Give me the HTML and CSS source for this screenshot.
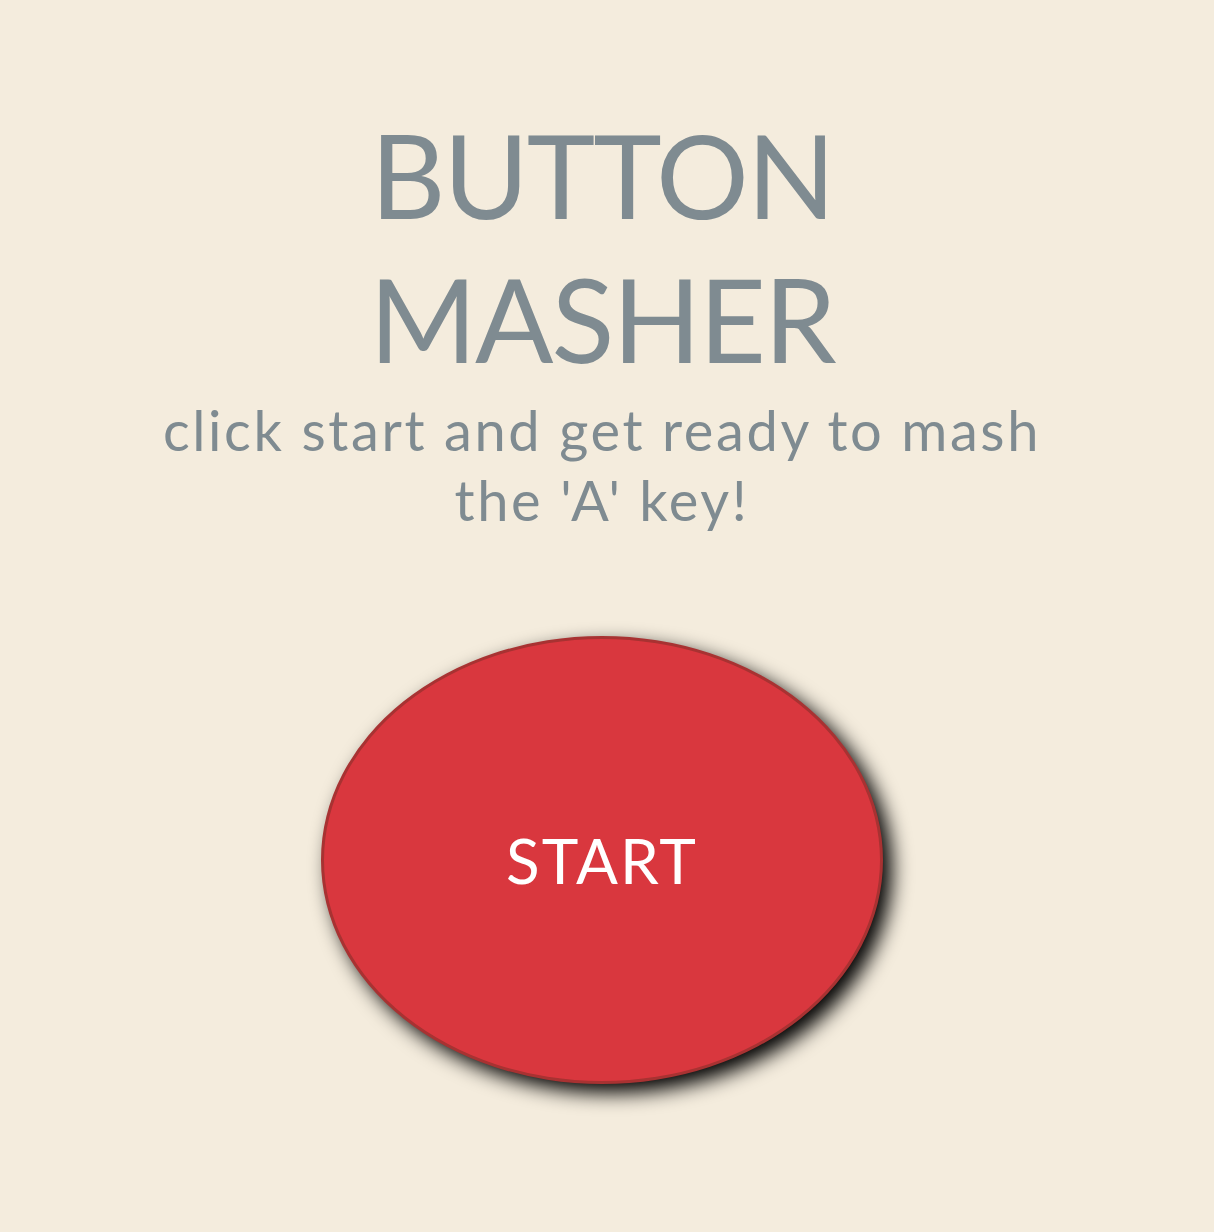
FILE: index.html
```html
<!DOCTYPE html>
<html>
<head>
<meta charset="utf-8">
<title>Button Masher</title>
<link rel="stylesheet" href="styles.css">
</head>
<body>
<main class="page">
  <h1 class="title">BUTTON<br>MASHER</h1>
  <p class="subtitle">click start and get ready to mash<br>the 'A' key!</p>
  <button class="start" type="button">START</button>
</main>
</body>
</html>
```

FILE: styles.css
```css
html, body {
  margin: 0;
  padding: 0;
  background: #f4ecdd;
}
.page {
  display: flex;
  flex-direction: column;
  align-items: center;
  font-family: "Lato", "Noto Sans", sans-serif;
  color: #7f8b91;
  padding: 103px 10px 120px 0;
}
.title {
  margin: 0;
  font-size: 116px;
  font-weight: 400;
  line-height: 144px;
  letter-spacing: -2px;
  text-align: center;
}
.subtitle {
  margin: 4px 0 0;
  font-size: 56px;
  font-weight: 400;
  line-height: 70px;
  letter-spacing: 2.6px;
  text-align: center;
}
.start {
  margin-top: 101px;
  width: 562px;
  height: 448px;
  border-radius: 50%;
  background: #d9373e;
  border: 3px solid #a83232;
  box-shadow: 9px 9px 20px #000000;
  color: #ffffff;
  font-family: "Lato", "Noto Sans", sans-serif;
  font-size: 62px;
  font-weight: 400;
  letter-spacing: 2px;
  padding: 0;
}
```
